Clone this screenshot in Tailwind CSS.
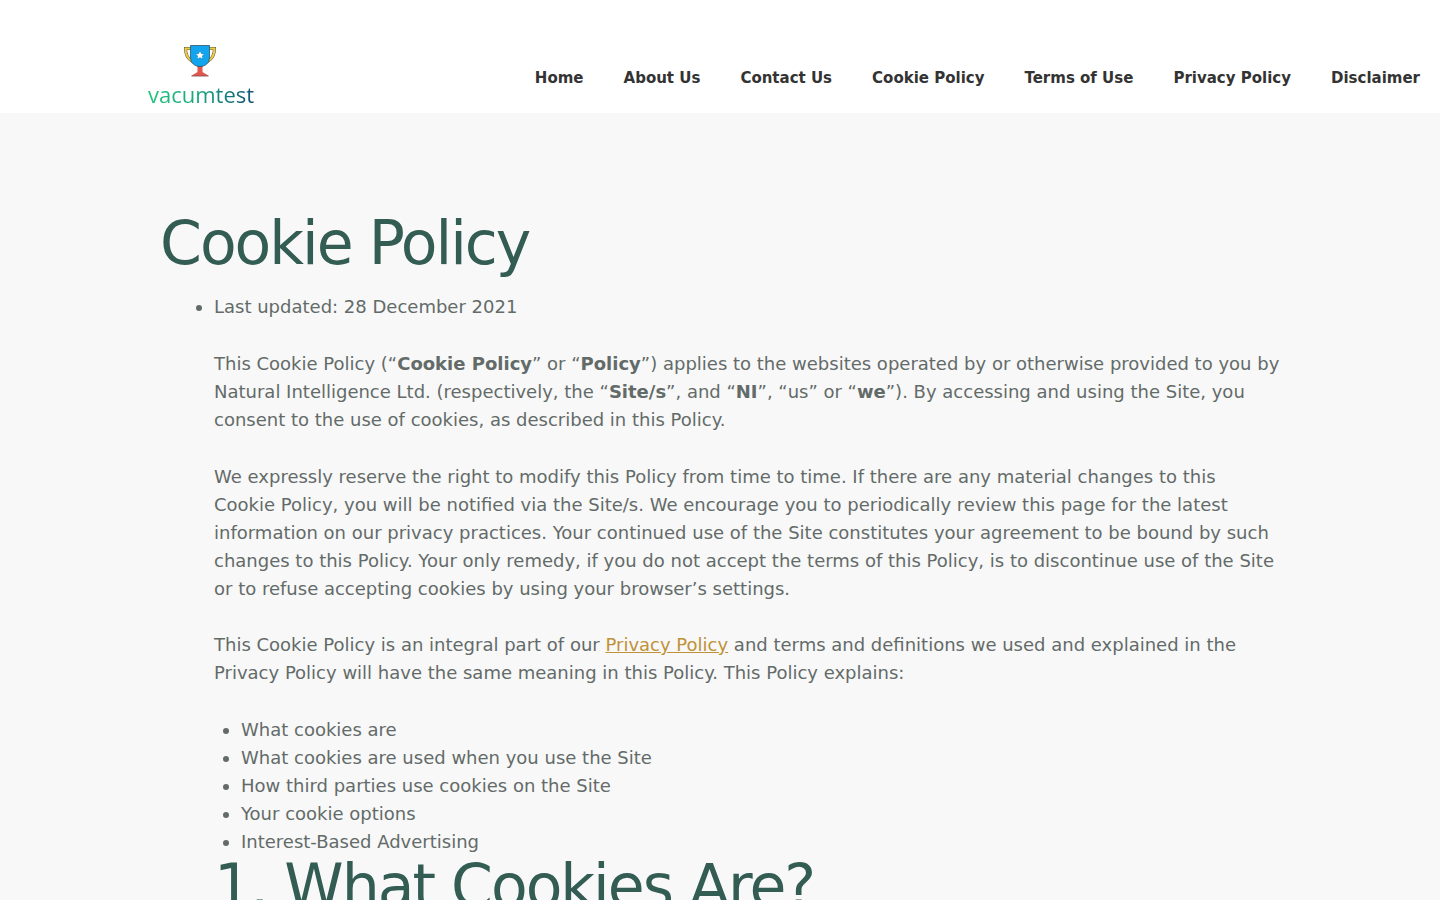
<!DOCTYPE html>
<html lang="en">
<head>
<meta charset="utf-8">
<meta name="viewport" content="width=device-width, initial-scale=1">
<title>Cookie Policy - vacumtest</title>
<script src="https://cdn.jsdelivr.net/npm/@tailwindcss/browser@4"></script>
</head>
<body class="bg-[#f8f8f8] font-['DejaVu_Sans',sans-serif] text-lg leading-7 text-[#636b69]">
<header class="flex items-end justify-between bg-white pt-11 pr-5 pl-37">
  <a href="#" class="flex flex-col items-center pb-[3px]" aria-label="vacumtest home">
    <svg class="mr-[3px] h-[34px] w-8" viewBox="0 0 32 34" aria-hidden="true">
      <path d="M7 4.500H1.500C1.500 10.500 4 15 8.500 17.500M25 4.500h5.500c0 6-2.500 10.500-7 13" fill="none" stroke="#5b5238" stroke-width="3"/>
      <path d="M7 4.500H1.500C1.500 10.500 4 15 8.500 17.500M25 4.500h5.500c0 6-2.500 10.500-7 13" fill="none" stroke="#f0cd48" stroke-width="2"/>
      <path d="M13.500 22h5v6l6.500 4H7l6.500-4z" fill="#e2574c"/>
      <path d="M13.500 22.500h5M7.500 32h17" stroke="#7d4a48" stroke-width=".8"/>
      <path d="M6.500 1.500h19V13c0 6-4 9.500-9.500 9.500S6.500 19 6.500 13z" fill="#10a5ee" stroke="#31566b" stroke-width=".8"/>
      <path d="m16 7 1.300 2.700 3 .4-2.200 2 .6 3-2.700-1.500-2.700 1.500.6-3-2.200-2 3-.4z" fill="#fff" stroke="#31566b" stroke-width=".3"/>
    </svg>
    <span class="bg-linear-to-r from-[#22c67c] via-[#1aa37c] to-[#155277] bg-clip-text font-['Open_Sans',sans-serif] text-[22px] leading-8 font-medium text-transparent">vacumtest</span>
  </a>
  <nav aria-label="Main" class="flex gap-10 pb-[23px] text-[15px] leading-6 font-bold text-[#333]">
    <a href="#">Home</a>
    <a href="#">About Us</a>
    <a href="#">Contact Us</a>
    <a href="#">Cookie Policy</a>
    <a href="#">Terms of Use</a>
    <a href="#">Privacy Policy</a>
    <a href="#">Disclaimer</a>
  </nav>
</header>
<main class="mx-auto max-w-[1120px] pt-24">
  <h1 class="text-[60px] leading-[68px] tracking-[-2px] text-[#335c53]">Cookie Policy</h1>
  <ul class="mt-4 list-disc pl-[54px]">
    <li>
      Last updated: 28 December 2021
      <p class="mt-[29px]">This Cookie Policy (“<strong>Cookie Policy</strong>” or “<strong>Policy</strong>”) applies to the websites operated by or otherwise provided to you by Natural Intelligence Ltd. (respectively, the “<strong>Site/s</strong>”, and “<strong>NI</strong>”, “us” or “<strong>we</strong>”). By accessing and using the Site, you consent to the use of cookies, as described in this Policy.</p>
      <p class="mt-[29px]">We expressly reserve the right to modify this Policy from time to time. If there are any material changes to this Cookie Policy, you will be notified via the Site/s. We encourage you to periodically review this page for the latest information on our privacy practices. Your continued use of the Site constitutes your agreement to be bound by such changes to this Policy. Your only remedy, if you do not accept the terms of this Policy, is to discontinue use of the Site or to refuse accepting cookies by using your browser’s settings.</p>
      <p class="mt-7">This Cookie Policy is an integral part of our <a href="#" class="text-[#bf9237] underline">Privacy Policy</a> and terms and definitions we used and explained in the Privacy Policy will have the same meaning in this Policy. This Policy explains:</p>
      <ul class="mt-[29px] list-disc pl-[27px]">
        <li>What cookies are</li>
        <li>What cookies are used when you use the Site</li>
        <li>How third parties use cookies on the Site</li>
        <li>Your cookie options</li>
        <li>Interest-Based Advertising</li>
      </ul>
      <h2 class="text-[60px] leading-[60px] tracking-[-2px] text-[#335c53]">1. What Cookies Are?</h2>
    </li>
  </ul>
</main>
</body>
</html>
